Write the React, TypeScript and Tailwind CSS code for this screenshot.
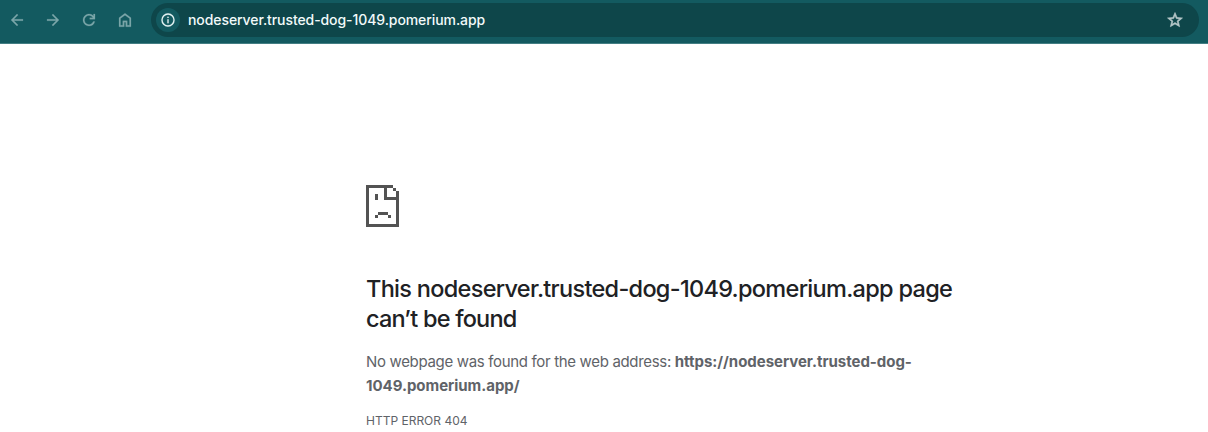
const material = "size-[18px] shrink-0 fill-current stroke-current stroke-[0.3]";

function Toolbar() {
  return (
    <header className="flex h-11 items-start border-b border-[#437e83] bg-[#135a60] pt-[3px] text-[#7ba6a9]">
      <nav className="flex h-[34px] w-[151px] shrink-0 items-center gap-[18px] pl-2">
        <svg viewBox="0 0 24 24" className={material} aria-label="Back"><path d="M20 11H7.83l5.59-5.59L12 4l-8 8 8 8 1.41-1.41L7.83 13H20v-2z" /></svg>
        <svg viewBox="0 0 24 24" className={material} aria-label="Forward"><path d="m12 4-1.41 1.41L16.17 11H4v2h12.17l-5.58 5.59L12 20l8-8z" /></svg>
        <svg viewBox="0 0 24 24" className={material} aria-label="Reload"><path d="M12 20a8 8 0 1 1 6-13.25V4h2v7h-7V9h4.2A6 6 0 1 0 17.65 14h2.1A8 8 0 0 1 12 20z" /></svg>
        <svg viewBox="0 0 24 24" className={material} aria-label="Home"><path d="M6 19h3v-6h6v6h3v-9l-6-4.5L6 10zm-2 2V9l8-6 8 6v12h-7v-6h-2v6z" /></svg>
      </nav>
      <div className="mr-[9px] flex h-[34px] w-12 grow items-center rounded-full bg-[#0e464a] pl-[5px] pr-[15px]">
        <span className="flex size-6 shrink-0 items-center justify-center rounded-full bg-[#135a60] text-[#e3f2f3]">
          <svg viewBox="0 0 24 24" className="size-4 fill-current stroke-current stroke-[0.2]"><path d="M11 7h2v2h-2zm0 4h2v6h-2zm1-9a10 10 0 1 0 0 20 10 10 0 0 0 0-20zm0 18a8 8 0 1 1 0-16 8 8 0 0 1 0 16z" /></svg>
        </span>
        <span className="ml-2 grow whitespace-nowrap text-[14px] leading-5 font-medium tracking-[-0.08px] text-[#f2fafa]">nodeserver.trusted-dog-1049.pomerium.app</span>
        <svg viewBox="0 0 24 24" className="size-[18px] shrink-0 fill-[#b7c8c9] stroke-[#b7c8c9] stroke-[0.8]"><path d="m22 9.24-7.19-.62L12 2 9.19 8.63 2 9.24l5.46 4.73L5.82 21 12 17.27 18.18 21l-1.63-7.03zM12 15.4l-3.76 2.27 1-4.28-3.32-2.88 4.38-.38L12 6.1l1.71 4.04 4.38.38-3.32 2.88 1 4.28z" /></svg>
      </div>
    </header>
  );
}

export default function App() {
  return (
    <div className="h-[432px] overflow-hidden bg-white font-['Inter',sans-serif]">
      <Toolbar />
      <main className="ml-[366px] w-[600px] pt-[141px] text-[#5f6368]">
        <svg viewBox="0 0 33 42" className="h-[42px] w-[33px] fill-[#535353]" shapeRendering="crispEdges">
          <path d="M0 0h27v3H0zM0 3h3v39H0zM3 39h30v3H3zM30 6h3v33h-3zM27 3h3v3h-3zM18 3h3v12h-3zM21 12h9v3h-9zM9 9h3v6H9zM12 27h10v3H12zM9 30h3v3H9zM22 30h3v3h-3z" />
        </svg>
        <h1 className="mt-[47px] whitespace-nowrap text-[23.5px] leading-[30px] font-medium text-[#202124]">
          <span className="tracking-[-0.7px]">This nodeserver.trusted-dog-1049.pomerium.app page</span><br />
          <span className="tracking-[-0.8px]">can’t be found</span>
        </h1>
        <p className="mt-4 whitespace-nowrap text-[15px] leading-6">
          <span className="tracking-[-0.33px]">No webpage was found for the web address: </span><strong className="font-bold tracking-[-0.03px]">https://nodeserver.trusted-dog-<br />1049.pomerium.app/</strong>
        </p>
        <p className="mt-3 text-[12px] leading-[22px]">HTTP ERROR 404</p>
      </main>
    </div>
  );
}
